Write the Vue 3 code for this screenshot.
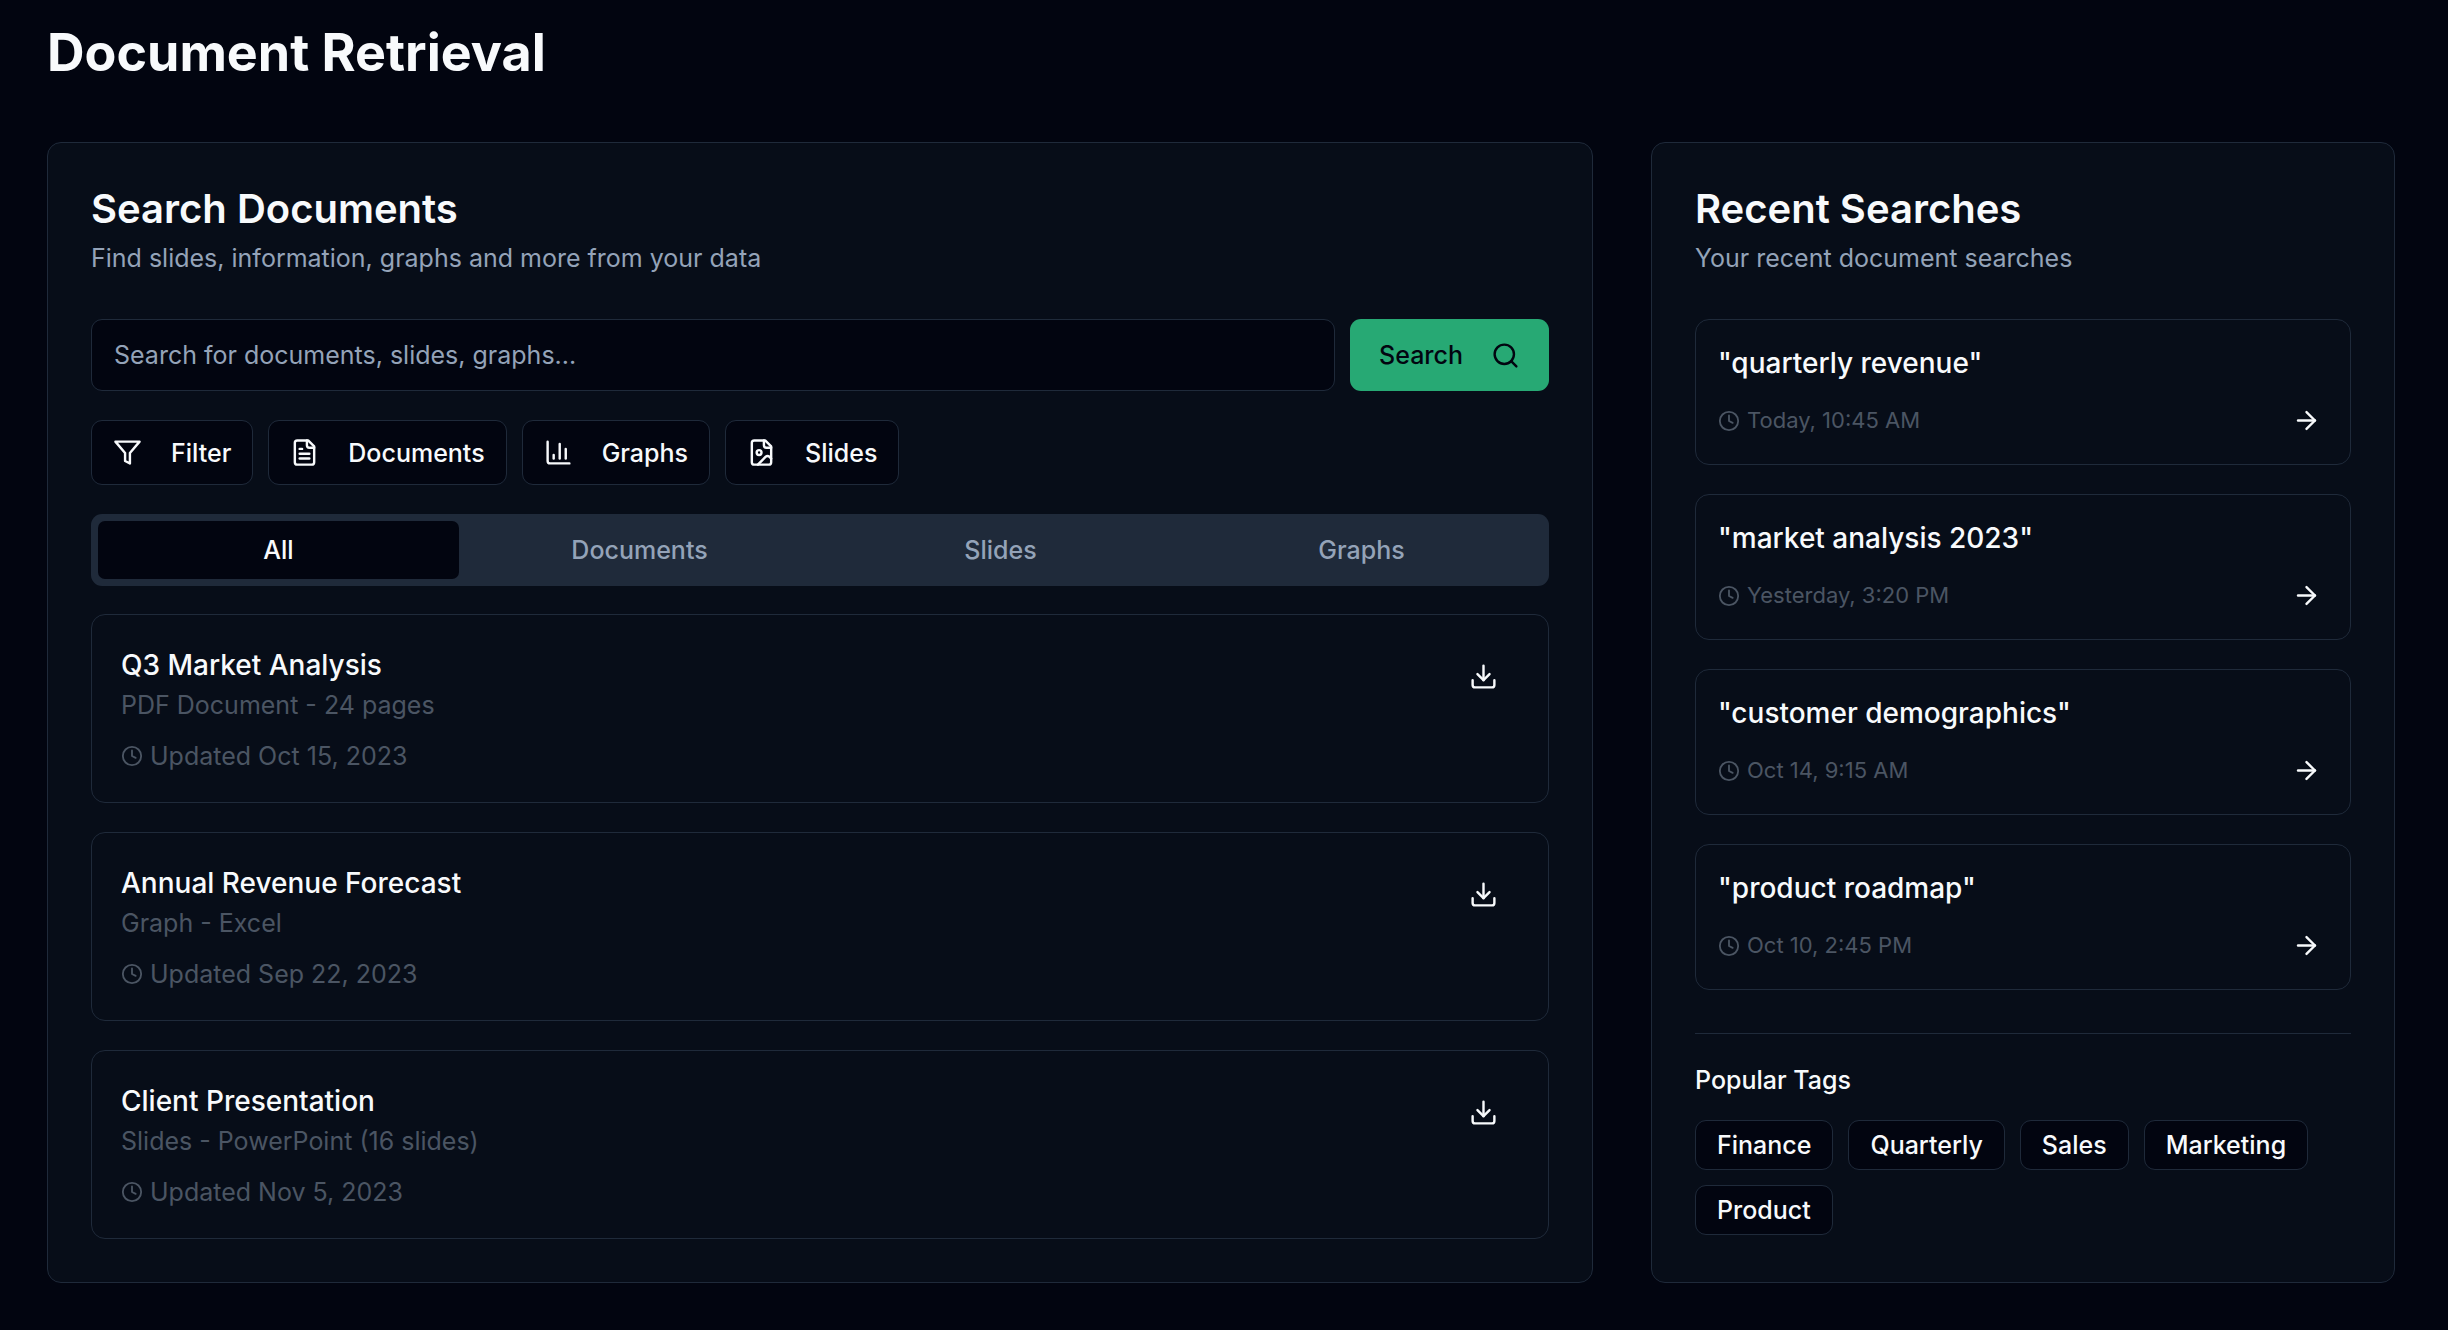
<script setup>
import { ref } from 'vue'

const query = ref('')
const activeTab = ref('All')
const tabs = ['All', 'Documents', 'Slides', 'Graphs']

const filters = [
  { label: 'Filter', paths: ['M22 3H2l8 9.46V19l4 2v-8.54L22 3z'] },
  {
    label: 'Documents',
    paths: [
      'M15 2H6a2 2 0 0 0-2 2v16a2 2 0 0 0 2 2h12a2 2 0 0 0 2-2V7Z',
      'M14 2v4a2 2 0 0 0 2 2h4',
      'M10 9H8',
      'M16 13H8',
      'M16 17H8'
    ]
  },
  { label: 'Graphs', paths: ['M3 3v16a2 2 0 0 0 2 2h16', 'M18 17V9', 'M13 17V5', 'M8 17v-3'] },
  {
    label: 'Slides',
    paths: [
      'M15 2H6a2 2 0 0 0-2 2v16a2 2 0 0 0 2 2h12a2 2 0 0 0 2-2V7Z',
      'M14 2v4a2 2 0 0 0 2 2h4',
      'M12 12a2 2 0 1 1-4 0a2 2 0 1 1 4 0',
      'm20 17-1.296-1.296a2.41 2.41 0 0 0-3.408 0L9 22'
    ]
  }
]

const documents = [
  { title: 'Q3 Market Analysis', kind: 'PDF Document - 24 pages', updated: 'Updated Oct 15, 2023' },
  { title: 'Annual Revenue Forecast', kind: 'Graph - Excel', updated: 'Updated Sep 22, 2023' },
  { title: 'Client Presentation', kind: 'Slides - PowerPoint (16 slides)', updated: 'Updated Nov 5, 2023' }
]

const searches = [
  { query: '"quarterly revenue"', time: 'Today, 10:45 AM' },
  { query: '"market analysis 2023"', time: 'Yesterday, 3:20 PM' },
  { query: '"customer demographics"', time: 'Oct 14, 9:15 AM' },
  { query: '"product roadmap"', time: 'Oct 10, 2:45 PM' }
]

const tags = ['Finance', 'Quarterly', 'Sales', 'Marketing', 'Product']
</script>

<template>
  <main class="page">
    <h1>Document Retrieval</h1>
    <div class="columns">
      <section class="panel main-panel">
        <header class="panel-head">
          <h2>Search Documents</h2>
          <p>Find slides, information, graphs and more from your data</p>
        </header>

        <form class="search" @submit.prevent>
          <input
            v-model="query"
            type="text"
            aria-label="Search documents"
            placeholder="Search for documents, slides, graphs..."
          />
          <button type="submit" class="search-btn">
            Search
            <svg class="icon" viewBox="0 0 24 24"><circle cx="11" cy="11" r="8" /><path d="m21 21-4.3-4.3" /></svg>
          </button>
        </form>

        <div class="filters">
          <button v-for="f in filters" :key="f.label" type="button" class="outline-btn">
            <svg class="icon" viewBox="0 0 24 24"><path v-for="d in f.paths" :key="d" :d="d" /></svg>
            {{ f.label }}
          </button>
        </div>

        <div class="tabs" role="tablist">
          <button
            v-for="t in tabs"
            :key="t"
            type="button"
            role="tab"
            class="tab"
            :class="{ active: t === activeTab }"
            :aria-selected="t === activeTab"
            @click="activeTab = t"
          >{{ t }}</button>
        </div>

        <ul class="list">
          <li v-for="d in documents" :key="d.title" class="doc">
            <div>
              <h3>{{ d.title }}</h3>
              <p class="kind">{{ d.kind }}</p>
              <p class="meta">
                <svg class="icon clock" viewBox="0 0 24 24"><circle cx="12" cy="12" r="10" /><path d="M12 6v6l4 2" /></svg>
                {{ d.updated }}
              </p>
            </div>
            <button type="button" class="ghost download" aria-label="Download">
              <svg class="icon" viewBox="0 0 24 24">
                <path d="M21 15v4a2 2 0 0 1-2 2H5a2 2 0 0 1-2-2v-4" /><path d="m7 10 5 5 5-5" /><path d="M12 15V3" />
              </svg>
            </button>
          </li>
        </ul>
      </section>

      <aside class="panel">
        <header class="panel-head">
          <h2>Recent Searches</h2>
          <p>Your recent document searches</p>
        </header>

        <ul class="list">
          <li v-for="s in searches" :key="s.query" class="recent">
            <h3>{{ s.query }}</h3>
            <div class="recent-foot">
              <p class="meta small">
                <svg class="icon clock" viewBox="0 0 24 24"><circle cx="12" cy="12" r="10" /><path d="M12 6v6l4 2" /></svg>
                {{ s.time }}
              </p>
              <button type="button" class="ghost open" aria-label="Run search again">
                <svg class="icon" viewBox="0 0 24 24"><path d="M5 12h14" /><path d="m12 5 7 7-7 7" /></svg>
              </button>
            </div>
          </li>
        </ul>

        <div class="tags-block">
          <h4>Popular Tags</h4>
          <div class="tags">
            <button v-for="t in tags" :key="t" type="button" class="tag">{{ t }}</button>
          </div>
        </div>
      </aside>
    </div>
  </main>
</template>

<style>
body {
  background: #020510;
}
</style>

<style scoped>
.page {
  --bg: #020510;
  --panel: #070d18;
  --border: #1f2a3a;
  --fg: #f8fafc;
  --muted: #94a3b8;
  --dim: #4b5563;
  box-sizing: border-box;
  min-height: 100vh;
  padding: 21px 53px 46px 47px;
  background: var(--bg);
  color: var(--fg);
  font-family: Inter, "Liberation Sans", sans-serif;
  font-size: 25px;
  line-height: 36px;
}
.page *, .page *::before { box-sizing: border-box; }
h1, h2, h3, h4, p, ul { margin: 0; padding: 0; }
ul { list-style: none; }
button, input { font: inherit; color: inherit; margin: 0; }
button { cursor: pointer; display: flex; align-items: center; justify-content: center; font-weight: 500; }
.icon {
  width: 29px;
  height: 29px;
  flex: none;
  fill: none;
  stroke: currentColor;
  stroke-width: 2;
  stroke-linecap: round;
  stroke-linejoin: round;
}
h1 { font-size: 52px; line-height: 64px; font-weight: 700; margin-bottom: 57px; }
.columns { display: grid; grid-template-columns: repeat(3, minmax(0, 1fr)); gap: 58px; }
.panel {
  background: var(--panel);
  border: 1px solid var(--border);
  border-radius: 14px;
  padding: 43px;
}
.main-panel { grid-column: span 2; }
.panel-head { margin-bottom: 43px; }
h2 { font-size: 40px; line-height: 46px; font-weight: 600; margin-bottom: 8px; }
.panel-head p { color: var(--muted); }

.search { display: flex; gap: 15px; margin-bottom: 29px; }
input {
  flex: 1;
  min-width: 0;
  height: 72px;
  padding: 0 22px;
  background: var(--bg);
  border: 1px solid var(--border);
  border-radius: 11px;
}
input::placeholder { color: var(--muted); opacity: 1; }
.search-btn {
  height: 72px;
  padding: 0 29px;
  gap: 28px;
  border: 0;
  border-radius: 11px;
  background: #27a974;
  color: var(--bg);
}
.filters { display: flex; flex-wrap: wrap; gap: 15px; margin-bottom: 29px; }
.outline-btn {
  height: 65px;
  gap: 29px;
  padding: 0 21px;
  background: var(--bg);
  border: 1px solid var(--border);
  border-radius: 11px;
}
.tabs {
  display: grid;
  grid-template-columns: repeat(4, 1fr);
  padding: 7px;
  background: var(--border);
  border-radius: 11px;
  margin-bottom: 28px;
}
.tab { height: 58px; padding: 0; border: 0; border-radius: 7px; background: transparent; color: var(--muted); }
.tab.active { background: var(--bg); color: var(--fg); }

.list { display: flex; flex-direction: column; gap: 29px; }
.doc {
  display: flex;
  justify-content: space-between;
  align-items: flex-start;
  padding: 29px 29px 28px;
  border: 1px solid var(--border);
  border-radius: 14px;
}
h3 { font-size: 28px; line-height: 43px; font-weight: 500; }
.kind { color: var(--dim); }
.meta { display: flex; align-items: center; gap: 7px; color: var(--dim); margin-top: 15px; }
.clock { width: 22px; height: 22px; }
.ghost { background: transparent; border: 0; padding: 0; }
.download { width: 72px; height: 65px; }
.recent { padding: 22px; border: 1px solid var(--border); border-radius: 14px; }
.recent-foot { display: flex; justify-content: space-between; align-items: center; margin-top: 14px; }
.small { font-size: 22px; line-height: 29px; margin: 0; }
.open { width: 43px; height: 43px; }

.tags-block { margin-top: 43px; padding-top: 28px; border-top: 1px solid var(--border); }
h4 { font-size: 25px; line-height: 36px; font-weight: 500; margin-bottom: 22px; }
.tags { display: flex; flex-wrap: wrap; gap: 15px; }
.tag {
  height: 50px;
  padding: 0 21px;
  background: var(--bg);
  border: 1px solid var(--border);
  border-radius: 11px;
}
</style>
